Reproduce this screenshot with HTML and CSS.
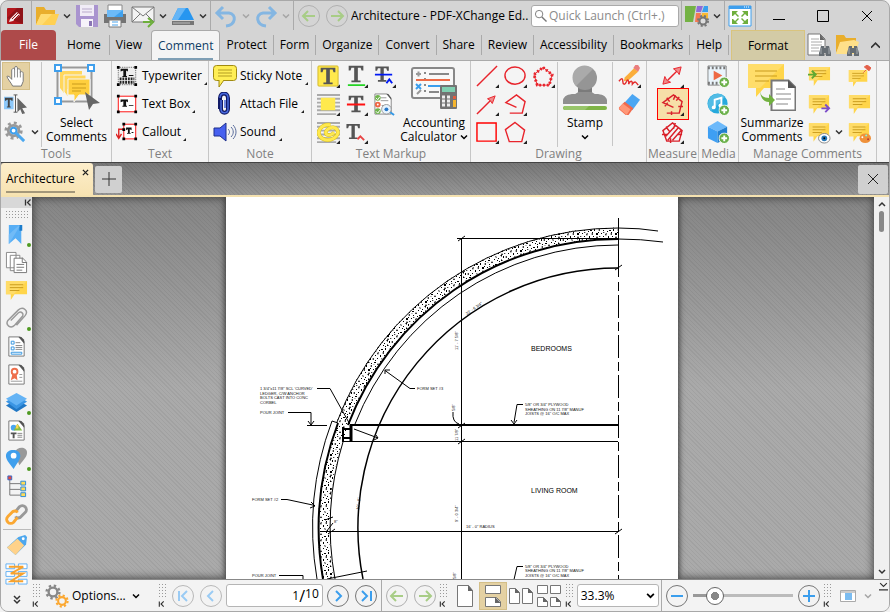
FILE: index.html
```
<!DOCTYPE html>
<html lang="en">
<head>
  <meta charset="UTF-8" />
  <meta name="viewport" content="width=device-width, initial-scale=1.0"/>
  <title>Architecture - PDF-XChange Editor</title>
  <link rel="stylesheet" href="styles.css">
</head>
<body>
  <!-- shared icons -->
  <svg class="sprite" aria-hidden="true">
    <defs>
      <pattern id="concrete" width="19" height="17" patternUnits="userSpaceOnUse">
        <rect width="19" height="17" fill="#fff"/>
        <path d="M1 1l2 1-1 1zM6 0h2v2zM11 2l2-1v2zM16 1h1v1h-1zM3 5h1v1H3zM7 4l2 2H7zM13 5h2v1h-2zM17 6l1 2h-2zM1 9h2v1H1zM5 8h1v2H5zM9 9l2-1v2zM14 9h1v1h-1zM2 13l2-1v2zM7 12h2v2H7zM12 12h1v1h-1zM16 13l2-1-1 3zM4 15h1v1H4zM10 15l2 1h-2zM14 15h1v1h-1zM10 6h1v1h-1zM0 4h1v1H0zM4 3h1v1H4zM14 3h1v1h-1zM5 6h1v1H5zM12 7l2 1h-1zM3 11h1v1H3zM9 11h1v1H9zM14 11l2 1h-2zM8 15l1 2H7zM18 10h1v1h-1zM0 15h1v2H0zM9 1h1v2H9z" fill="#000"/>
      </pattern>
      <symbol id="chev" viewBox="0 0 8 8"><path d="M1 2.500l3 3 3-3" fill="none" stroke="currentColor" stroke-width="1.500"/></symbol>
      <symbol id="collapse" viewBox="0 0 8 8"><path d="M1.500 1v6M6.500 1l-3 3 3 3" fill="none" stroke="#333" stroke-width="1.300"/></symbol>
      <symbol id="note" viewBox="0 0 24 24">
        <path d="M1 2h22v14H10l-4 6v-6H1z" fill="#ffd54a"/>
        <path d="M1 2h22L9 16H1z" fill="#ffdc68"/>
        <path d="M5 6h14M5 9h14M5 12h10" stroke="#c99b1c"/>
      </symbol>
      <symbol id="circ" viewBox="0 0 24 24"><circle cx="12" cy="12" r="10.500" fill="none" stroke="currentColor"/></symbol>
      <symbol id="back" viewBox="0 0 24 24"><circle cx="12" cy="12" r="10.500" fill="none" stroke="#b0b0b0"/><path d="M18 12H7M11 7l-5 5 5 5" fill="none" stroke="#a8cd86" stroke-width="2"/></symbol>
      <symbol id="fwd" viewBox="0 0 24 24"><circle cx="12" cy="12" r="10.500" fill="none" stroke="#b0b0b0"/><path d="M6 12h11M13 7l5 5-5 5" fill="none" stroke="#a8cd86" stroke-width="2"/></symbol>
      <symbol id="undo" viewBox="0 0 24 24"><path d="M9 3L3 9l6 6M3 9h12c8 1 7 12-3 13" fill="none" stroke="#84b6e2" stroke-width="3"/></symbol>
      <symbol id="binoc" viewBox="0 0 12 12"><path d="M2 1h3v2h2V1h3l2 7v3H7V8H5v3H0V8z" fill="#666d73"/><path d="M2 3v6M10 3v6" stroke="#a5abb0"/></symbol>
      <symbol id="plus" viewBox="0 0 12 12"><circle cx="6" cy="6" r="5.500" fill="#6ab04a" stroke="#fff"/><path d="M6 3v6M3 6h6" stroke="#fff" stroke-width="2"/></symbol>
      <symbol id="sheet" viewBox="0 0 24 24"><path d="M4 2h12l4 5v15H4z" fill="#fff" stroke="#777"/><path d="M14 2l6 7V5l-3-3z" fill="#555"/></symbol>
      <symbol id="gear" viewBox="0 0 20 20"><circle cx="10" cy="10" r="5.500" fill="none" stroke="currentColor" stroke-width="3"/><circle cx="10" cy="10" r="8" fill="none" stroke="currentColor" stroke-width="3" stroke-dasharray="3 3.280"/></symbol>
      <symbol id="corner" viewBox="0 0 4 4"><path d="M4 0v4H0z" fill="#222"/></symbol>
      <symbol id="bigT" viewBox="0 0 24 24"><path d="M4 3h16v5h-2l-1-3h-3v14h3v2H7v-2h3V5H7L6 8H4z" fill="#555"/></symbol>
    </defs>
  </svg>

  <div class="window">
    <header class="titlebar">
      <svg class="logo" viewBox="0 0 16 16"><rect width="16" height="16" rx="1" fill="#b3171d"/><path d="M0 10L10 0h6v16z" fill="#8f1218"/><path d="M3 11l7-7 3 3-7 6-4 1z" fill="#f4e8e8"/><path d="M5 11l6-6M7 12l5-5" stroke="#9c171c"/></svg>
      <span class="sep"></span>
      <button class="tool" aria-label="Open"><svg viewBox="0 0 24 24"><path d="M1 3h8l2 3h9v5H6L1 21z" fill="#e9ae2c"/><path d="M6 10h18l-4 11H1z" fill="#ffd052"/><path d="M6 10h11L7 21H1z" fill="#ffdc72"/></svg></button>
      <button class="drop" aria-label="Open options"><svg><use href="#chev"/></svg></button>
      <button class="tool" aria-label="Save"><svg viewBox="0 0 24 24"><path d="M1 1h22v22H4l-3-3z" fill="#a994cf"/><path d="M5 1h14v11H5z" fill="#f0ecf6"/><path d="M7 5h10M7 8h10" stroke="#b9aacc"/><path d="M6 15h12v8H6z" fill="#f6f3fa"/><path d="M14 17h3v5h-3z" fill="#8a75b3"/></svg></button>
      <button class="tool" aria-label="Print"><svg viewBox="0 0 24 24"><path d="M5 1h14v6H5z" fill="#fff" stroke="#888"/><path d="M1 10h22v9H1z" fill="#747474"/><path d="M4 6h16v7H4z" fill="#3fa1ee"/><path d="M4 6h16l-9 7H4z" fill="#6cbaf7"/><path d="M6 16h12v7H6z" fill="#fff" stroke="#777"/><path d="M9 18h6M9 21h6" stroke="#4aa4ec"/></svg></button>
      <button class="tool" aria-label="Send by email"><svg viewBox="0 0 24 24"><path d="M1 3h22v15H1z" fill="#f3f3f3" stroke="#777"/><path d="M1 3l11 9 11-9M1 18l8-8M23 18l-8-8" fill="none" stroke="#777"/><path d="M12 18h8M17 14l5 4-5 5" fill="none" stroke="#6daf3b" stroke-width="2"/></svg></button>
      <button class="drop" aria-label="Email options"><svg><use href="#chev"/></svg></button>
      <button class="tool" aria-label="Scan"><svg viewBox="0 0 24 24"><path d="M7 4h10l6 12H1z" fill="#2796f0"/><path d="M7 4h8L7 16H1z" fill="#65b5f6"/><path d="M1 17h22v4H1z" fill="#767676"/><path d="M2 19h17" stroke="#bbb"/></svg></button>
      <button class="drop" aria-label="Scan options"><svg><use href="#chev"/></svg></button>
      <span class="sep"></span>
      <button class="tool" aria-label="Undo"><svg><use href="#undo"/></svg></button>
      <button class="drop dim" aria-label="Undo list"><svg><use href="#chev"/></svg></button>
      <button class="tool flip" aria-label="Redo"><svg><use href="#undo"/></svg></button>
      <button class="drop dim" aria-label="Redo list"><svg><use href="#chev"/></svg></button>
      <span class="sep"></span>
      <button class="tool" aria-label="Previous view"><svg><use href="#back"/></svg></button>
      <button class="tool" aria-label="Next view"><svg><use href="#fwd"/></svg></button>
      <h1 class="title">Architecture - PDF-XChange Ed..</h1>
      <label class="search">
        <svg viewBox="0 0 14 14"><circle cx="5.500" cy="5.500" r="4" fill="none" stroke="#777"/><path d="M8.500 8.500l5 5" stroke="#777" stroke-width="1.500"/></svg>
        <input type="text" placeholder="Quick Launch (Ctrl+.)" aria-label="Quick Launch">
      </label>
      <span class="sep"></span>
      <button class="tool" aria-label="UI options"><svg viewBox="0 0 24 24"><path d="M0 2h11L8 18H0z" fill="#74b244"/><path d="M12 2h6l-2 6h-5z" fill="#8f6bd8"/><path d="M19 2h4v6h-6z" fill="#38a0ee"/><path d="M11 9h5l-2 9h-4z" fill="#f47952"/><path d="M17 9h6v6h-7z" fill="#f9b932"/><circle cx="18" cy="17" r="3.500" fill="#ddd" stroke="#777" stroke-width="2"/><circle cx="18" cy="17" r="5" fill="none" stroke="#777" stroke-width="2" stroke-dasharray="2 2"/></svg></button>
      <button class="drop" aria-label="UI options list"><svg><use href="#chev"/></svg></button>
      <span class="sep"></span>
      <button class="tool" aria-label="Full screen"><svg viewBox="0 0 24 24"><path d="M1 2h22v20H1z" fill="#fff" stroke="#3f9fed"/><path d="M1 2h22v3H1z" fill="#3f9fed"/><path d="M16 3h1M18 3h1M20 3h1" stroke="#fff"/><path d="M4 7h6L8 9l3 3-1 1-3-3-2 2H4zM20 7h-6l2 2-3 3 1 1 3-3 2 2h1zM4 20h6l-2-2 3-3-1-1-3 3-2-2H4zM20 20h-6l2-2-3-3 1-1 3 3 2-2h1z" fill="#6fae3c"/></svg></button>
      <span class="sep"></span>
      <button class="winbtn" aria-label="Minimize"><svg viewBox="0 0 14 14"><path d="M1 10.500h12" stroke="#000"/></svg></button>
      <button class="winbtn" aria-label="Maximize"><svg viewBox="0 0 14 14"><path d="M1.500 1.500h11v11h-11z" fill="none" stroke="#000"/></svg></button>
      <button class="winbtn" aria-label="Close"><svg viewBox="0 0 14 14"><path d="M2 2l10 10M12 2L2 12" stroke="#000"/></svg></button>
    </header>

    <nav class="tabs">
      <button class="tab file">File</button>
      <button class="tab">Home</button>
      <button class="tab last">View</button>
      <button class="tab active"><span>Comment</span></button>
      <button class="tab">Protect</button>
      <button class="tab">Form</button>
      <button class="tab">Organize</button>
      <button class="tab">Convert</button>
      <button class="tab">Share</button>
      <button class="tab">Review</button>
      <button class="tab">Accessibility</button>
      <button class="tab">Bookmarks</button>
      <button class="tab">Help</button>
      <button class="tab format">Format</button>
      <span class="grow"></span>
      <button class="tool" aria-label="Find"><svg viewBox="0 0 24 24"><path d="M1 1h12l5 5v16H1z" fill="#fff" stroke="#777"/><path d="M13 1v6h5" fill="#666"/><path d="M4 6h8M4 9h11M4 12h11M4 15h8M4 18h8" stroke="#aaa"/><use href="#binoc" x="12" y="12" width="12" height="12"/></svg></button>
      <button class="tool" aria-label="Search"><svg viewBox="0 0 24 24"><path d="M1 2h8l2 3h10v6H5L1 20z" fill="#e9ae2c"/><path d="M5 9l14-2 5 2-4 12H1z" fill="#ffe08a"/><use href="#binoc" x="12" y="12" width="12" height="12"/></svg></button>
      <button class="tool min" aria-label="Collapse ribbon"><svg viewBox="0 0 8 8"><path d="M0 6l4-4 4 4" fill="none" stroke="#333" stroke-width="1.500"/></svg></button>
    </nav>

    <section class="ribbon">
      <div class="group g-tools">
        <div class="body">
          <div class="stack line">
            <button class="ico on" aria-label="Hand"><svg viewBox="0 0 24 24"><path d="M8 22c-2-4-5-7-6-10 1-1 3 0 5 3V5c1-2 3-2 3 0V3c0-2 3-2 3 0v2c1-2 3-1 3 1v2c1-2 3-1 3 1v8l-2 5z" fill="#fff" stroke="#777"/><path d="M10 5v8M13 4v9M16 7v6" stroke="#888"/></svg></button>
            <button class="ico" aria-label="Select text"><svg viewBox="0 0 24 24"><path d="M0 4h10v13H0z" fill="#8cc8fa"/><path d="M1 5h8v3H8L7 7H6v7h1v1H3v-1h1V7H3L2 8H1z" fill="#444"/><path d="M12 2v18M10 2h4M10 20h4" stroke="#555"/><path d="M14 5l10 10-5 1 3 5-3 1-2-5-3 3z" fill="#666"/></svg></button>
            <div class="pair">
              <button class="ico" aria-label="Tool settings"><svg viewBox="0 0 24 24"><g color="#999"><use href="#gear" x="0" y="0" width="20" height="20"/></g><circle cx="10" cy="10" r="3" fill="#fff" stroke="#3b9eed" stroke-width="2"/><path d="M12 12l9 9" stroke="#4ba8ef" stroke-width="3"/></svg></button>
              <button class="drop" aria-label="Tool settings list"><svg><use href="#chev"/></svg></button>
            </div>
          </div>
          <button class="big">
            <svg viewBox="0 0 48 48"><path d="M4.500 4.500h34v34h-34z" fill="none" stroke="#999" stroke-width="2"/><path d="M7 8h22v14H11v8l-4-5z" fill="#ffd75d"/><path d="M11 12h22v14H15v8l-4-5z" fill="#ffd75d" stroke="#f4f4f4"/><path d="M15 16h22v16H26l-5 7v-7h-6z" fill="#ffcf3e" stroke="#f4f4f4"/><path d="M19 21h14M19 25h14M19 28h9" stroke="#c99b1c"/><g fill="#fff" stroke="#3f9fed" stroke-width="2"><path d="M2 2h6v6H2zM35 2h6v6h-6zM2 35h6v6H2z"/></g><path d="M32 29l15 11-7 1-4 6z" fill="#666"/></svg>
            <span>Select<br>Comments</span>
          </button>
        </div>
        <h2>Tools</h2>
      </div>

      <div class="group g-text">
        <div class="body stack">
          <button class="row"><svg viewBox="0 0 24 24"><path d="M2.500 2.500h19v19h-19z" fill="#eee" stroke="#555" stroke-dasharray="1 1"/><path d="M5 4h8v3l-2-1v6h1v1H7v-1h1V6L5 7zM14 11h5v1h-5z" fill="#111"/><path d="M4 15h16M4 19h16" stroke="#222" stroke-width="3" stroke-dasharray="2 1"/><path d="M1 1h3v3H1zM20 1h3v3h-3zM1 20h3v3H1zM20 20h3v3h-3z"/></svg>Typewriter<svg class="tick"><use href="#corner"/></svg></button>
          <button class="row"><svg viewBox="0 0 24 24"><path d="M2.500 3.500h19v17h-19z" fill="#fff" stroke="#f00"/><path d="M5 7h8v3l-2-1v5h1v1H7v-1h1V9l-3 1zM14 13h5v1h-5z" fill="#111"/><path d="M1 2h3v3H1zM20 2h3v3h-3zM1 19h3v3H1zM20 19h3v3h-3z"/></svg>Text Box<svg class="tick"><use href="#corner"/></svg></button>
          <button class="row"><svg viewBox="0 0 24 24"><path d="M8.500 3.500h13v16h-13z" fill="#fff" stroke="#f00"/><path d="M8 9H3v9M0 14l3 5 3-5" fill="none" stroke="#d22" stroke-width="1.500"/><path d="M11 7h6v3l-2-1v4h1v1h-4v-1h1V9l-2 1zM17 12h2v1h-2z" fill="#111"/><path d="M7 2h3v3H7zM20 2h3v3h-3zM7 18h3v3H7zM20 18h3v3h-3zM7 8h3v3H7z"/></svg>Callout<svg class="tick"><use href="#corner"/></svg></button>
        </div>
        <h2>Text</h2>
      </div>

      <div class="group g-note">
        <div class="body stack">
          <button class="row"><svg viewBox="0 0 24 24"><rect x="0.500" y="1.500" width="23" height="15" rx="3" fill="#ffee55" stroke="#a08a10"/><path d="M6 16v7l5-7" fill="#ffee55" stroke="#a08a10"/><path d="M5 6h14M5 9h14M5 12h14" stroke="#b39d22"/></svg>Sticky Note<svg class="tick"><use href="#corner"/></svg></button>
          <button class="row"><svg viewBox="0 0 24 24"><path d="M8 8v9c0 5 7 5 7 0V6c0-6-8-6-8 0v11" fill="none" stroke="#111a66" stroke-width="4"/><path d="M12 8v8M8 8v9c0 5 7 5 7 0V6c0-6-8-6-8 0" fill="none" stroke="#4668dd" stroke-width="1.500"/></svg>Attach File<svg class="tick"><use href="#corner"/></svg></button>
          <button class="row"><svg viewBox="0 0 24 24"><path d="M1 8h6l6-5v18l-6-5H1z" fill="#4660f0" stroke="#1c2e8c"/><path d="M15 9c2 2 2 4 0 6M18 7c3 3 3 7 0 10M20 5c4 4 4 10 0 14" fill="none" stroke="#5b6d9c"/></svg>Sound<svg class="tick"><use href="#corner"/></svg></button>
        </div>
        <h2>Note</h2>
      </div>

      <div class="group g-markup">
        <div class="body">
          <div class="grid3">
            <button class="ico" aria-label="Highlight"><svg viewBox="0 0 24 24"><rect x="1" y="1" width="21" height="21" rx="1" fill="#ffe94d" stroke="#d3b92a"/><use href="#bigT" width="23" height="23"/><use href="#corner" x="20" y="20" width="4" height="4"/></svg></button>
            <button class="ico" aria-label="Underline"><svg viewBox="0 0 24 24"><use href="#bigT" y="-2" width="23" height="23"/><path d="M3 21h18" stroke="#25d425" stroke-width="2"/><use href="#corner" x="20" y="20" width="4" height="4"/></svg></button>
            <button class="ico" aria-label="Replace text"><svg viewBox="0 0 24 24"><use href="#bigT" y="-2" x="-1" width="21" height="23"/><path d="M2 10h18" stroke="#0019f5" stroke-width="2"/><path d="M14 19l3-4 3 4" fill="none" stroke="#0019f5" stroke-width="2"/><use href="#corner" x="20" y="20" width="4" height="4"/></svg></button>
            <button class="ico" aria-label="Highlight area"><svg viewBox="0 0 24 24"><path d="M0 2h24M0 6h24M0 10h24M0 14h24M0 18h24M0 22h20" stroke="#aaa" stroke-width="2"/><path d="M4 5h15v13H4z" fill="#ffe94d"/><use href="#corner" x="20" y="20" width="4" height="4"/></svg></button>
            <button class="ico" aria-label="Strikeout"><svg viewBox="0 0 24 24"><use href="#bigT" width="23" height="23"/><path d="M2 12h19" stroke="#f11" stroke-width="2"/><use href="#corner" x="20" y="20" width="4" height="4"/></svg></button>
            <button class="ico" aria-label="Review list"><svg viewBox="0 0 24 24"><path d="M2 1h13l4 5v16H2z" fill="#fff" stroke="#888"/><path d="M14 1l5 6V5l-3-4z" fill="#555"/><path d="M8 5h6M8 8h8M9 13h4" stroke="#999"/><circle cx="5" cy="5" r="3" fill="#70b34d"/><circle cx="5" cy="12" r="2" fill="#fff" stroke="#e64" stroke-width="2"/><circle cx="5" cy="19" r="3" fill="#70b34d"/><path d="M3 5l2 2 2-3M3 19l2 2 2-3" fill="none" stroke="#fff"/><circle cx="14" cy="17" r="5" fill="#e7f3fd" stroke="#999"/><circle cx="14" cy="17" r="2" fill="#2878c8"/><path d="M18 20l4 3" stroke="#3598e4" stroke-width="2"/></svg></button>
            <button class="ico" aria-label="Marker"><svg viewBox="0 0 24 24"><path d="M0 2h24M0 6h24M0 10h24M0 14h24M0 18h24M0 22h20" stroke="#aaa" stroke-width="2"/><path d="M14 4C4 3-2 12 5 18c8 5 20-2 16-9C17 3 6 10 10 14c3 2 7-1 8-2" fill="none" stroke="#d5bd26" stroke-width="4"/><path d="M14 4C4 3-2 12 5 18c8 5 20-2 16-9C17 3 6 10 10 14c3 2 7-1 8-2" fill="none" stroke="#ffe94d" stroke-width="3"/><use href="#corner" x="20" y="20" width="4" height="4"/></svg></button>
            <button class="ico" aria-label="Squiggly"><svg viewBox="0 0 24 24"><use href="#bigT" y="0" x="-2" width="21" height="22"/><path d="M13 19l3-3 4 4" fill="none" stroke="#e84444" stroke-width="2"/><use href="#corner" x="20" y="20" width="4" height="4"/></svg></button>
          </div>
          <button class="big">
            <svg viewBox="0 0 48 48"><rect x="2" y="5" width="42" height="30" rx="2" fill="#f8f8f8" stroke="#888" stroke-width="2"/><path d="M14 10h2M14 16h2M14 22h2M14 28h2" stroke="#888" stroke-width="2"/><path d="M19 11h20M19 23h12M19 29h10" stroke="#888" stroke-width="2"/><path d="M6 17h34" stroke="#ee6b47" stroke-width="2"/><path d="M18 23h15" stroke="#3b9eed" stroke-width="2"/><path d="M6 11h5M8.500 8.500v5M11 27l-4 4" stroke="#999" stroke-width="2"/><path d="M6 21l5 5M11 21l-5 5" stroke="#3b9eed" stroke-width="2"/><rect x="30" y="22" width="17" height="24" rx="1" fill="#737373"/><path d="M32 24h13v5H32z" fill="#7fd0b1"/><g stroke="#eee" stroke-width="3" stroke-dasharray="3 2"><path d="M32 34h10M32 38h10M32 42h10"/></g><path d="M43 33h3v3h-3z" fill="#e35d40"/><path d="M43 37h3v7h-3z" fill="#f6b52d"/></svg>
            <span>Accounting<br>Calculator <svg class="inl"><use href="#chev"/></svg></span>
          </button>
        </div>
        <h2>Text Markup</h2>
      </div>

      <div class="group g-draw">
        <div class="body">
          <div class="grid3 line">
            <button class="ico" aria-label="Line"><svg viewBox="0 0 24 24"><path d="M1 22L22 1" stroke="#e8242c" stroke-width="1.500"/><use href="#corner" x="20" y="20" width="4" height="4"/></svg></button>
            <button class="ico" aria-label="Oval"><svg viewBox="0 0 24 24"><ellipse cx="11.500" cy="11" rx="10.500" ry="9" fill="none" stroke="#e8242c" stroke-width="1.500"/><use href="#corner" x="20" y="20" width="4" height="4"/></svg></button>
            <button class="ico" aria-label="Cloud"><svg viewBox="0 0 24 24"><path d="M11.500 2.500l9.500 7.500-3 11H5.500L2 10z" fill="none" stroke="#e8242c"/><path d="M11.500 2.500l9.500 7.500-3 11H5.500L2 10z" fill="none" stroke="#e8242c" stroke-width="3" stroke-dasharray="2 2"/><use href="#corner" x="20" y="20" width="4" height="4"/></svg></button>
            <button class="ico" aria-label="Arrow"><svg viewBox="0 0 24 24"><path d="M1 22L17 6" stroke="#e8242c" stroke-width="1.500"/><path d="M12 6l8-3-3 8-2-3z" fill="#f08a8a" stroke="#e8242c"/><use href="#corner" x="20" y="20" width="4" height="4"/></svg></button>
            <button class="ico" aria-label="Polyline"><svg viewBox="0 0 24 24"><path d="M13 15L2 10l11-8 9 7-3 12H6" fill="none" stroke="#e8242c" stroke-width="1.500"/><use href="#corner" x="20" y="20" width="4" height="4"/></svg></button>
            <span></span>
            <button class="ico" aria-label="Rectangle"><svg viewBox="0 0 24 24"><path d="M1 2h20v19H1z" fill="none" stroke="#f00" stroke-width="1.500"/><use href="#corner" x="20" y="20" width="4" height="4"/></svg></button>
            <button class="ico" aria-label="Polygon"><svg viewBox="0 0 24 24"><path d="M11.500 1.500l10 8-3 12h-13L1.500 9z" fill="none" stroke="#e8242c" stroke-width="1.500"/><use href="#corner" x="20" y="20" width="4" height="4"/></svg></button>
          </div>
          <button class="big stamp line">
            <svg viewBox="0 0 48 48"><path d="M17 20h14v14H17z" fill="#7b7b7b"/><circle cx="24" cy="15" r="12" fill="#959595"/><path d="M15 23a12 12 0 0117-17z" fill="#aaa"/><path d="M2 41v-4c1-4 5-6 11-6 3 0 3-2 5-2h12c2 0 2 2 5 2 6 0 10 2 11 6v4z" fill="#8f8f8f"/><rect x="2" y="43" width="44" height="4" rx="2" fill="#7fb447"/><path d="M4 43h24l-4 4H4c-2 0-2-4 0-4z" fill="#98c56a"/></svg>
            <span>Stamp</span>
            <svg class="inl"><use href="#chev"/></svg>
          </button>
          <div class="stack side">
            <button class="ico" aria-label="Pencil"><svg viewBox="0 0 24 24"><path d="M7 13L17 3l4 4-10 9-5 1z" fill="#fbae3b"/><path d="M16 3l2-3h3l2 3-2 4z" fill="#ea7d7d"/><path d="M1 17c3-4 4-3 4 0s2 5 4 0c1-3 3 0 2 3 2-4 4-4 4 0 3-4 4-2 6 1" fill="none" stroke="#e32c2c" stroke-width="1.500"/><use href="#corner" x="20" y="20" width="4" height="4"/></svg></button>
            <button class="ico" aria-label="Eraser"><svg viewBox="0 0 24 24"><path d="M15 1l8 6-8 11-9-7z" fill="#4ba6f3"/><path d="M7 9l9 7-5 7H8l-7-6v-2z" fill="#f2694b"/><path d="M5 11l8 6-4 6-8-7z" fill="#ff9777"/></svg></button>
          </div>
        </div>
        <h2>Drawing</h2>
      </div>

      <div class="group g-measure">
        <div class="body stack">
          <button class="ico" aria-label="Distance"><svg viewBox="0 0 24 24"><path d="M7 16L18 5" stroke="#e8242c" stroke-width="1.500"/><path d="M13 4l8-2-2 8-2-3zM4 12l-2 8 8-2-4-2z" fill="#f08a8a" stroke="#e8242c"/><use href="#corner" x="20" y="20" width="4" height="4"/></svg></button>
          <button class="ico picked" aria-label="Perimeter"><svg viewBox="0 0 24 24"><path d="M13 15L2 10l11-8 9 7-3 12H6M6 5l3 4M15 2l-2 5M19 4l-3 4M18 14h5M11 19v4M7 10l-3 4" fill="none" stroke="#d9202a" stroke-width="1.500"/><use href="#corner" x="20" y="20" width="4" height="4"/></svg></button>
          <button class="ico" aria-label="Area"><svg viewBox="0 0 24 24"><path d="M12 2l10 8-3 11H6L2 10zM5 16L15 5M7 20L18 7M12 20l9-10M5 6l4 5M15 2l-2 6M1 14h6M10 18v5M17 14h5" fill="none" stroke="#d9202a" stroke-width="1.500"/><use href="#corner" x="20" y="20" width="4" height="4"/></svg></button>
        </div>
        <h2>Measure</h2>
      </div>

      <div class="group g-media">
        <div class="body stack">
          <button class="ico" aria-label="Add video"><svg viewBox="0 0 24 24"><path d="M1 1h19v20H1z" fill="#eaf4fb" stroke="#888"/><path d="M1 3h19M1 19h19" stroke="#777" stroke-width="3" stroke-dasharray="2 2"/><path d="M7 6l9 5-9 5z" fill="#ed6a47"/><use href="#plus" x="12" y="12" width="12" height="12"/></svg></button>
          <button class="ico" aria-label="Add audio"><svg viewBox="0 0 24 24"><circle cx="11" cy="11" r="10.500" fill="#26a9dc"/><path d="M4 19L19 4A10.500 10.500 0 004 19z" fill="#52bce5"/><path d="M8 15V7l7-2v8" fill="none" stroke="#fff" stroke-width="2"/><circle cx="7" cy="15" r="2" fill="#fff"/><circle cx="14" cy="13" r="2" fill="#fff"/><use href="#plus" x="12" y="12" width="12" height="12"/></svg></button>
          <button class="ico" aria-label="Add 3D"><svg viewBox="0 0 24 24"><path d="M11 0l10 6-10 5L1 6z" fill="#6cb9fa"/><path d="M1 6l10 5v12L1 18z" fill="#3e9ff3"/><path d="M21 6l-10 5v12l10-5z" fill="#217fd0"/><use href="#plus" x="12" y="12" width="12" height="12"/></svg></button>
        </div>
        <h2>Media</h2>
      </div>

      <div class="group g-manage">
        <div class="body">
          <button class="big">
            <svg viewBox="0 0 48 48"><path d="M0 1h36v24H16l-8 9v-9H0z" fill="#ffd54a"/><path d="M0 1h36L12 25H0z" fill="#ffdd6a"/><path d="M7 8h22M7 13h22M7 18h14" stroke="#c99b1c"/><path d="M23.500 17.500h17l7 7v23h-24z" fill="#fff" stroke="#777" stroke-width="2"/><path d="M40 17v8h8z" fill="#555"/><path d="M28 26h9M28 31h15M28 36h15M28 41h12" stroke="#888"/><path d="M12 26c0 8 5 9 9 9v-4l6 6-6 6v-4c-6 0-9-5-9-13z" fill="#72b13f"/></svg>
            <span>Summarize<br>Comments</span>
          </button>
          <div class="grid2">
            <button class="ico" aria-label="Import"><svg viewBox="0 0 24 24"><use href="#note" width="24" height="24"/><path d="M0 10h8M4 6l4 4-4 4" fill="none" stroke="#5fa932" stroke-width="2"/></svg></button>
            <button class="ico" aria-label="Pin comments"><svg viewBox="0 0 24 24"><use href="#note" y="3" width="21" height="22"/><path d="M16 8l3-3M17 2l5 4 2-3-4-3z" stroke="#e4604a" fill="#e4604a"/></svg></button>
            <button class="ico" aria-label="Export"><svg viewBox="0 0 24 24"><use href="#note" width="23" height="24"/><path d="M14 16h8M18 12l4 4-4 4" fill="none" stroke="#7c4ec9" stroke-width="2"/></svg></button>
            <button class="ico" aria-label="Comment list"><svg><use href="#note"/></svg></button>
            <div class="pair">
              <button class="ico" aria-label="Show comments"><svg viewBox="0 0 24 24"><use href="#note" width="23" height="24"/><ellipse cx="17" cy="18" rx="6" ry="5" fill="#fff" stroke="#888"/><circle cx="17" cy="18" r="3" fill="#2476b6"/><circle cx="17" cy="18" r="1"/></svg></button>
              <button class="drop" aria-label="Show options"><svg><use href="#chev"/></svg></button>
            </div>
            <button class="ico" aria-label="Comment styles"><svg viewBox="0 0 24 24"><use href="#note" width="23" height="24"/><ellipse cx="18" cy="18" rx="6" ry="5" fill="#ef913a"/><circle cx="15" cy="17" r="1" fill="#fff"/><circle cx="19" cy="15" r="1" fill="#7fd"/><circle cx="21" cy="19" r="1" fill="#b33"/></svg></button>
          </div>
        </div>
        <h2>Manage Comments</h2>
      </div>
    </section>

    <div class="doctabs">
      <button class="doctab"><span>Architecture</span><svg viewBox="0 0 8 8"><path d="M1 1l6 6M7 1L1 7" stroke="#222" stroke-width="1.500"/></svg></button>
      <button class="sq" aria-label="New tab"><svg viewBox="0 0 16 16"><path d="M8 1v14M1 8h14" stroke="#333"/></svg></button>
      <span class="grow"></span>
      <button class="sq wide" aria-label="Close document"><svg viewBox="0 0 16 16"><path d="M3 3l10 10M13 3L3 13" stroke="#222"/></svg></button>
    </div>

    <main class="main">
      <aside class="sidebar">
        <div class="sidehead"><svg><use href="#collapse"/></svg></div>
        <div class="grip wideg"></div>
        <button class="pane dot" aria-label="Bookmarks"><svg viewBox="0 0 24 24"><path d="M4 2h13v20l-6-6-7 6z" fill="#57aef5"/><path d="M15 2h3v6h-3z" fill="#1c7dcc"/><path d="M4 22V12L15 2v2z" fill="#71bbf7"/></svg></button>
        <button class="pane" aria-label="Thumbnails"><svg viewBox="0 0 24 24"><path d="M1.500 1.500h10v16h-10zM5.500 4.500h10v16h-10z" fill="#fff" stroke="#888"/><path d="M9.500 7.500h9l4 4v11h-13z" fill="#fff" stroke="#777"/><path d="M18 7v5h5M12 14h8M12 17h8M12 20h6" fill="none" stroke="#777"/></svg></button>
        <button class="pane" aria-label="Comments"><svg><use href="#note"/></svg></button>
        <button class="pane dot" aria-label="Attachments"><svg viewBox="0 0 24 24"><path d="M6 14l8-8c3-2 6 1 4 4l-8 9c-4 4-10 0-7-5L14 3c5-4 11 1 7 6l-9 10" fill="none" stroke="#999" stroke-width="1.500"/></svg></button>
        <button class="pane" aria-label="Fields"><svg viewBox="0 0 24 24"><use href="#sheet" width="24" height="24"/><path d="M6.500 6.500h3v3h-3zM6.500 12.500h3v3h-3zM6.500 18h11v2h-11z" fill="#fff" stroke="#3595e0"/><path d="M11 8h5M11 11h7M11 13h7M11 15h7" stroke="#888"/></svg></button>
        <button class="pane" aria-label="Signatures"><svg viewBox="0 0 24 24"><use href="#sheet" width="24" height="24"/><path d="M8 11l-2 7 4-2 3 2-1-7z" fill="#ee6e4b"/><circle cx="10" cy="9" r="3" fill="#fff" stroke="#ee6e4b" stroke-width="2"/><path d="M15 12h3M15 15h3M6 19h12" stroke="#999"/></svg></button>
        <button class="pane dot" aria-label="Layers"><svg viewBox="0 0 24 24"><path d="M1 15l11-6 11 6-11 7z" fill="#2177c4"/><path d="M1 11l11-6 11 6-11 8z" fill="#3a95e4"/><path d="M1 8l11-6 11 6-11 7z" fill="#64b3f5"/></svg></button>
        <button class="pane" aria-label="Content"><svg viewBox="0 0 24 24"><use href="#sheet" width="24" height="24"/><circle cx="9" cy="9" r="3" fill="#4ba6ef"/><path d="M13 5l5 7H9z" fill="#83bd45"/><path d="M12 6h2v4h-3z" fill="#ffd34e"/><path d="M6 14h6v2h-2v4H8v-4H6z" fill="#555"/><path d="M13 15h5M13 17h5M13 19h5" stroke="#888"/></svg></button>
        <button class="pane dot" aria-label="Destinations"><svg viewBox="0 0 24 24"><path d="M15 19c6-7 8-10 8-13 0-7-11-7-13 0" fill="#999"/><path d="M9 23C4 16 1 13 1 9c0-8 15-8 15 0 0 4-3 7-7 14z" fill="#3f9fed"/><circle cx="9" cy="9" r="3" fill="#fff"/></svg></button>
        <button class="pane" aria-label="Tags"><svg viewBox="0 0 24 24"><path d="M5 4v17h11M5 9h11M5 15h11" fill="none" stroke="#777"/><path d="M3 1h4v4H3z" fill="#e84b3c" stroke="#36c"/><path d="M16.500 6.500h5v4h-5zM16.500 12.500h5v4h-5zM16.500 18.500h5v4h-5z" fill="#ffdc58" stroke="#2b8bdb"/></svg></button>
        <button class="pane" aria-label="Links"><svg viewBox="0 0 24 24"><path d="M11 9l4-5c4-4 10 2 6 6l-5 5c-2 1-4 1-5-1" fill="none" stroke="#999" stroke-width="3"/><path d="M13 15l-4 5c-4 4-10-2-6-6l5-5c2-1 4-1 5 1" fill="none" stroke="#fba832" stroke-width="3"/></svg></button>
        <hr>
        <button class="pane" aria-label="Named items"><svg viewBox="0 0 24 24"><path d="M14 3l7-2 2 2-1 8-11 11-9-8z" fill="#4da7ee"/><path d="M13 5l7 7-9 10-9-8z" fill="#ffd28a"/><circle cx="19" cy="5" r="1.500" fill="#fff"/></svg></button>
        <button class="pane" aria-label="Order"><svg viewBox="0 0 24 24"><path d="M1 2h9v5H1zM14 2h9v5h-9zM1 10h9v5H1zM14 10h9v5h-9zM1 18h9v5H1zM14 18h9v5h-9z" fill="#fff" stroke="#62b0f2"/><path d="M4 5h15L6 12h13L6 20h13" fill="none" stroke="#f8a22c" stroke-width="2"/></svg></button>
        <span class="grow"></span>
        <button class="more" aria-label="More panes"><svg viewBox="0 0 10 10"><path d="M2 1l3 3 3-3M2 5l3 3 3-3" fill="none" stroke="#333" stroke-width="1.500"/></svg></button>
      </aside>

      <div class="viewer">
        <div class="workrow">
          <div class="work">
            <svg class="page" viewBox="226 197 452 382" preserveAspectRatio="xMidYMin slice">
              <g fill="none" stroke="#000">
                <!-- concrete wall, all arcs share the centre 618,528 -->
                <path d="M342 423A295 295 0 01618 233" stroke="url(#concrete)" stroke-width="11"/>
                <path d="M343 424A294 294 0 00328 579" stroke="url(#concrete)" stroke-width="11"/>
                <path d="M337 422A300 300 0 01618 228Q640 228 658 231"/>
                <path d="M348 425A289 289 0 01618 239" stroke-width="2"/>
                <path d="M618 239Q641 239 663 242M355 424A283 283 0 01618 245"/>
                <path d="M363 579A260 260 0 01618 268" stroke-width="1.500"/>
                <path d="M317 579A305 305 0 01332 421l6 2"/>
                <path d="M323 579A299 299 0 01338 423" stroke-width="2"/>
                <path d="M335 579A288 288 0 01343 442"/>
                <!-- floors and dimension lines -->
                <path d="M350 425h268" stroke-width="2"/>
                <path d="M343 441.500h275M320 531.500h299M457 238.500h161M461.500 238v341M458 241l7-5M458 428l7-5M458 444l7-5M615 534l7-5M615 270l7-5M328 534l7-5"/>
                <path d="M618.500 218v59"/>
                <path d="M618.500 282v304" stroke-dasharray="9 4 23 4"/>
                <!-- ledger -->
                <path d="M351 425v17" stroke-width="3"/>
                <path d="M342 429h9M342 438h9M343 427v15" stroke-width="2"/>
                <path d="M354 429l24 9M374 440l4-2-2-3M327 579l40-8M333 523l-7 9M325 520l8-3"/>
                <!-- leaders -->
                <path d="M317 388.500h13l20 36M288 412.500h23V425M307 425.500h20M308 421l3 4 3-4M415 388.500h-5l-25-18M385 374v-4h5M281 499.500h6l28 6M311 502l4 4-5 2M523 404.500h-6l-3 18M511 420l3 4 3-4M523 566.500h-6l-3 13M453 412q-1 10 6 12M279 575.500h24v4"/>
              </g>
              <g class="rooms">
                <text x="531" y="351">BEDROOMS</text>
                <text x="531" y="493">LIVING ROOM</text>
              </g>
              <g class="notes">
                <text x="260" y="390">1 3/4"x11 7/8" SCL 'CURVED'</text>
                <text x="260" y="395">LEDGER, C/W ANCHOR</text>
                <text x="260" y="399">BOLTS CAST INTO CONC</text>
                <text x="260" y="404">CORBEL</text>
                <text x="260" y="414">POUR JOINT</text>
                <text x="417" y="390">FORM SET #3</text>
                <text x="252" y="501">FORM SET #2</text>
                <text x="252" y="577">POUR JOINT</text>
                <text x="525" y="406">5/8" OR 3/4" PLYWOOD</text>
                <text x="525" y="411">SHEATHING ON 11 7/8" MANUF</text>
                <text x="525" y="415">JOISTS @ 16" O/C MAX</text>
                <text x="525" y="568">5/8" OR 3/4" PLYWOOD</text>
                <text x="525" y="572">SHEATHING ON 11 7/8" MANUF</text>
                <text x="525" y="577">JOISTS @ 16" O/C MAX</text>
                <text x="466" y="528">16' - 0"  RADIUS</text>
                <text x="334" y="523">8"</text>
                <text transform="translate(458 350) rotate(-90)">11' - 7 5/8"</text>
                <text transform="translate(455 411) rotate(-90)">5/8"</text>
                <text transform="translate(458 441) rotate(-90)">11 7/8"</text>
                <text transform="translate(458 522) rotate(-90)">9' - 0 3/4"</text>
                <text transform="translate(456 579) rotate(-90)">5/8"</text>
                <text transform="translate(359 510) rotate(-83)">10' - 0"</text>
                <text transform="translate(467 315) rotate(-35)">22' - 6 3/4"</text>
              </g>
            </svg>
          </div>
          <div class="scroll">
            <svg viewBox="0 0 8 8"><path d="M1 6l3-3 3 3" fill="none" stroke="#333" stroke-width="1.500"/></svg>
            <span class="thumb"></span>
            <span class="grow"></span>
            <svg viewBox="0 0 8 8"><path d="M1 2l3 3 3-3" fill="none" stroke="#333" stroke-width="1.500"/></svg>
          </div>
        </div>

        <footer class="status">
          <div class="gripcol"><div class="grip"></div><svg><use href="#collapse"/></svg></div>
          <button class="options"><svg viewBox="0 0 24 24"><g color="#888"><use href="#gear" x="0" y="0" width="16" height="16"/></g><g color="#fba832"><use href="#gear" x="10" y="10" width="14" height="14"/></g></svg>Options...<svg class="inl"><use href="#chev"/></svg></button>
          <div class="gripcol"><div class="grip"></div><svg><use href="#collapse"/></svg></div>
          <button class="nav soft" aria-label="First page"><svg viewBox="0 0 24 24"><use href="#circ"/><path d="M8 7v10M16 7l-5 5 5 5" fill="none" stroke="#9acbf4" stroke-width="2"/></svg></button>
          <button class="nav soft" aria-label="Previous page"><svg viewBox="0 0 24 24"><use href="#circ"/><path d="M14 7l-5 5 5 5" fill="none" stroke="#9acbf4" stroke-width="2"/></svg></button>
          <div class="pagebox"><input type="text" value="1" aria-label="Page number"><span class="slash">/</span><span class="total">10</span></div>
          <button class="nav" aria-label="Next page"><svg viewBox="0 0 24 24"><use href="#circ"/><path d="M10 7l5 5-5 5" fill="none" stroke="#3b9eed" stroke-width="2"/></svg></button>
          <button class="nav" aria-label="Last page"><svg viewBox="0 0 24 24"><use href="#circ"/><path d="M8 7l5 5-5 5M17 7v10" fill="none" stroke="#3b9eed" stroke-width="2"/></svg></button>
          <span class="sep"></span>
          <button class="nav" aria-label="Previous view"><svg><use href="#back"/></svg></button>
          <button class="nav" aria-label="Next view"><svg><use href="#fwd"/></svg></button>
          <div class="gripcol"><div class="grip"></div><svg><use href="#collapse"/></svg></div>
          <div class="views">
            <button class="nav" aria-label="Single page"><svg viewBox="0 0 24 24"><path d="M4.500 1.500h11l4 5v16h-15z" fill="#fff" stroke="#777"/><path d="M15 1v6h5z" fill="#666"/></svg></button>
            <button class="nav sel" aria-label="Continuous"><svg viewBox="0 0 24 24"><path d="M4.500 1.500h15v8h-15zM4.500 13.500h11l4 4v5h-15z" fill="#fff" stroke="#777"/><path d="M14 13v6h6z" fill="#666"/></svg></button>
            <button class="nav" aria-label="Two pages"><svg viewBox="0 0 24 24"><path d="M0.500 4.500h6l4 4v11h-10zM13.500 4.500h6l4 4v11h-10z" fill="#fff" stroke="#777"/><path d="M6 4v5h5zM19 4v5h5z" fill="#666"/></svg></button>
            <button class="nav" aria-label="Two pages continuous"><svg viewBox="0 0 24 24"><path d="M0.500 1.500h10v8h-10zM13.500 1.500h10v8h-10zM0.500 13.500h6l4 4v5h-10zM13.500 13.500h6l4 4v5h-10z" fill="#fff" stroke="#777"/><path d="M6 13v5h5zM19 13v5h5z" fill="#666"/></svg></button>
          </div>
          <div class="gripcol"><div class="grip"></div><svg><use href="#collapse"/></svg></div>
          <div class="zoombox"><select aria-label="Zoom"><option>33.3%</option><option>100%</option></select><svg><use href="#chev"/></svg></div>
          <span class="sep"></span>
          <button class="nav" aria-label="Zoom out"><svg viewBox="0 0 24 24"><use href="#circ"/><path d="M6 12h12" stroke="#3b9eed" stroke-width="2"/></svg></button>
          <input class="slider" type="range" min="0" max="100" value="16" aria-label="Zoom level">
          <button class="nav" aria-label="Zoom in"><svg viewBox="0 0 24 24"><use href="#circ"/><path d="M6 12h12M12 6v12" stroke="#3b9eed" stroke-width="2"/></svg></button>
          <div class="gripcol"><div class="grip"></div><svg><use href="#collapse"/></svg></div>
          <button class="nav" aria-label="Pan and zoom"><svg viewBox="0 0 24 24"><path d="M4.500 6.500h15v11h-15z" fill="#fff" stroke="#aaa"/><path d="M5 7h14v2H5z" fill="#ccc"/><path d="M9 9h7v7H9z" fill="#7bbcf0"/></svg></button>
          <button class="drop dim" aria-label="More"><svg><use href="#chev"/></svg></button>
          <span class="grow"></span>
          <button class="end" aria-label="Last page"><svg viewBox="0 0 8 8"><path d="M1 1l3 3 3-3M0 7h8" fill="none" stroke="#333"/></svg></button>
        </footer>
      </div>
    </main>
  </div>
</body>
</html>
```
FILE: styles.css
```
* {
  box-sizing: border-box;
}

body {
  margin: 0;
  height: 100vh;
  background: #f3f3f3;
  font-family: "Open Sans", "Noto Sans", sans-serif;
  font-size: 12px;
  line-height: 14px;
  color: #000;
}

button {
  font: inherit;
  color: inherit;
  background: none;
  border: none;
  padding: 0;
  white-space: nowrap;
}

h1, h2 {
  margin: 0;
  font-size: 12px;
  font-weight: normal;
}

svg {
  display: block;
  flex: none;
}

.sprite {
  position: absolute;
  width: 0;
  height: 0;
}

.grow {
  flex: 1;
}

.window {
  height: 100%;
  display: flex;
  flex-direction: column;
  background: #d4d4d4;
  border: 1px solid #a8a8a8;
  border-radius: 8px;
  overflow: hidden;
}

/* title bar */
.titlebar {
  height: 29px;
  flex: none;
  display: flex;
  align-items: center;
}

.logo {
  width: 16px;
  height: 16px;
  margin: 0 7px 0 6px;
}

.sep {
  width: 1px;
  align-self: stretch;
  background: #aaa;
  margin: 0 1px;
  flex: none;
}

.tool {
  width: 28px;
  height: 28px;
  flex: none;
  display: flex;
  align-items: center;
  justify-content: center;
}

.tool svg {
  width: 24px;
  height: 24px;
}

.flip svg {
  transform: scaleX(-1);
}

.drop {
  width: 12px;
  flex: none;
  display: flex;
  align-items: center;
  justify-content: center;
  color: #333;
}

.drop svg,
.inl {
  width: 8px;
  height: 8px;
}

.dim {
  color: #a5a5a5;
}

.title {
  flex: 1;
  min-width: 0;
  overflow: hidden;
  white-space: nowrap;
}

.search {
  width: 148px;
  height: 22px;
  margin-right: 1px;
  display: flex;
  align-items: center;
  background: #fff;
  border: 1px solid #aaa;
  border-radius: 3px;
  padding-left: 2px;
}

.search svg {
  width: 13px;
  height: 13px;
}

.search input {
  flex: 1;
  min-width: 0;
  border: none;
  outline: none;
  background: none;
  font: inherit;
  padding: 0 0 0 2px;
}

.search input::placeholder {
  color: #8b8b8b;
}

.winbtn {
  width: 44px;
  height: 28px;
  display: flex;
  align-items: center;
  justify-content: center;
}

.winbtn svg {
  width: 14px;
  height: 14px;
}

/* ribbon tabs */
.tabs {
  height: 31px;
  flex: none;
  display: flex;
  align-items: center;
  border-bottom: 1px solid #aaa;
}

.tab {
  height: 20px;
  padding: 0 6px;
  border-right: 1px solid #aaa;
}

.tab.last {
  border-right: none;
  margin-right: 3px;
}

.tab.file {
  height: 30px;
  width: 55px;
  background: #ae4a4a;
  color: #fff;
  border: none;
  border-radius: 4px 4px 0 0;
  margin-right: 5px;
}

.tab.file + .tab {
  padding: 0 8px 0 6px;
}

.tab.active {
  height: 30px;
  padding: 2px 6px 0;
  background: #f4f4f4;
  color: #0f3d66;
  border: 1px solid #aaa;
  border-bottom: none;
  border-radius: 4px 4px 0 0;
}

.tab.active span {
  display: block;
  height: 26px;
  line-height: 24px;
  border-bottom: 2px solid #7f9fb5;
}

.tab.format {
  height: 30px;
  width: 74px;
  margin-left: 2px;
  background: #d3cba6;
  border: 1px solid #d9c47e;
  border-bottom: none;
}

.tool.min svg {
  width: 9px;
  height: 9px;
}

/* ribbon */
.ribbon {
  height: 102px;
  flex: none;
  display: flex;
  background: #f4f4f4;
  border-bottom: 1px solid #444;
}

.group {
  flex: none;
  display: flex;
  flex-direction: column;
  border-right: 1px solid #c6c6c6;
}

.body {
  height: 86px;
  display: flex;
  padding-top: 1px;
}

.group h2 {
  text-align: center;
  color: #808080;
}

.g-tools { width: 111px; }
.g-text { width: 97px; }
.g-note { width: 103px; }
.g-markup { width: 159px; }
.g-draw { width: 176px; }
.g-measure { width: 52px; }
.g-media { width: 40px; }
.g-manage { width: 138px; }

.stack {
  display: flex;
  flex-direction: column;
}

.body.stack {
  padding-left: 4px;
}

.g-measure .stack,
.g-media .stack {
  align-items: center;
  padding-left: 0;
}

.line {
  border-right: 1px solid #c6c6c6;
}

.pair {
  display: flex;
  align-items: center;
}

.ico {
  width: 28px;
  height: 28px;
  flex: none;
  display: flex;
  align-items: center;
  justify-content: center;
}

.ico svg {
  width: 23px;
  height: 23px;
}

.ico.on {
  margin-left: 1px;
  background: #e4d1a3;
  border: 1px solid #d4bf88;
}

.ico.picked {
  width: 32px;
  height: 32px;
  margin: -2px 0;
  background: #f6dfa8;
  border: 1px solid #f00;
}

.row {
  height: 28px;
  display: flex;
  align-items: center;
  gap: 3px;
}

.row svg {
  width: 24px;
  height: 24px;
}

.g-text .row {
  gap: 4px;
}

.g-text .row svg {
  width: 22px;
  height: 22px;
}

.row .tick,
.g-text .row .tick {
  width: 3px;
  height: 3px;
  margin-top: 14px;
}

.g-text .row .tick {
  margin-left: -2px;
}

.big {
  flex: 1;
  min-width: 0;
  display: flex;
  flex-direction: column;
  align-items: center;
  line-height: 14px;
}

.big > svg {
  width: 48px;
  height: 48px;
  margin: 1px 0 5px;
}

.big .inl {
  width: 8px;
  height: 8px;
  margin: 0;
}

.big span .inl {
  display: inline-block;
}

.grid3 {
  display: grid;
  grid-template-columns: 28px 28px 28px;
  grid-auto-rows: 28px;
  padding-left: 2px;
}

.stamp {
  margin-bottom: 1px;
}

.stamp .inl {
  margin-top: 3px;
}

.side {
  width: 33px;
  align-items: center;
}

.grid2 {
  display: grid;
  grid-template-columns: 40px 28px;
  grid-auto-rows: 28px;
  margin-right: 3px;
}

/* document tabs */
.doctabs {
  height: 34px;
  flex: none;
  display: flex;
  align-items: center;
  background-color: #8b8b8b;
  background-image: repeating-linear-gradient(45deg, rgba(0, 0, 0, 0.06) 0 1px, transparent 1px 3px), linear-gradient(#777, #969696);
  border-bottom: 2px solid #f5e2b0;
}

.doctab {
  height: 32px;
  width: 92px;
  padding: 0 0 0 5px;
  display: flex;
  align-items: center;
  justify-content: space-between;
  background: linear-gradient(#fdeecb, #f7e3b2);
  border-radius: 3px 3px 0 0;
}

.doctab span {
  height: 28px;
  line-height: 28px;
  border-bottom: 2px solid #a3977a;
}

.doctab svg {
  width: 7px;
  height: 7px;
  margin: 0 4px 14px 0;
}

.sq {
  width: 27px;
  height: 27px;
  margin-left: 2px;
  display: flex;
  align-items: center;
  justify-content: center;
  background: #d0d0d0;
  border-radius: 2px;
}

.sq svg {
  width: 16px;
  height: 16px;
}

.sq.wide {
  width: 30px;
  height: 29px;
  margin-right: 1px;
}

/* side panes */
.main {
  flex: 1;
  min-height: 0;
  display: flex;
  background: #f3f3f3;
}

.sidebar {
  width: 31px;
  flex: none;
  display: flex;
  flex-direction: column;
  align-items: center;
}

.sidehead {
  height: 11px;
  flex: none;
  align-self: stretch;
  background: #d8d8d8;
  display: flex;
  justify-content: flex-end;
  align-items: center;
}

.sidehead svg {
  width: 8px;
  height: 9px;
}

.grip {
  width: 9px;
  height: 16px;
  background-image: radial-gradient(#999 30%, transparent 40%);
  background-size: 3px 3px;
}

.wideg {
  width: 24px;
  height: 10px;
  margin: 2px 0 0;
  flex: none;
}

.pane {
  position: relative;
  width: 28px;
  height: 28px;
  flex: none;
  display: flex;
  align-items: center;
  justify-content: center;
}

.pane svg {
  width: 23px;
  height: 23px;
}

.dot::after {
  content: "";
  position: absolute;
  right: 0;
  bottom: 1px;
  width: 4px;
  height: 4px;
  border-radius: 2px;
  background: #4f9a20;
}

.sidebar hr {
  width: 28px;
  margin: 1px 0;
  border: none;
  border-top: 1px solid #bbb;
  flex: none;
}

.more {
  height: 22px;
  flex: none;
}

.more svg {
  width: 10px;
  height: 10px;
}

/* document view */
.viewer {
  flex: 1;
  min-width: 0;
  display: flex;
  flex-direction: column;
}

.workrow {
  flex: 1;
  min-height: 0;
  display: flex;
}

.work {
  flex: 1;
  min-width: 0;
  display: flex;
  justify-content: center;
  overflow: hidden;
  padding-right: 2px;
  background-color: #a2a2a2;
  background-image: repeating-linear-gradient(45deg, rgba(0, 0, 0, 0.05) 0 1px, transparent 1px 3px), linear-gradient(#858585, #aaa 50%);
  box-shadow: inset 0 0 10px #333;
}

.page {
  width: 452px;
  height: 100%;
  background: #fff;
  box-shadow: 0 0 6px 1px #333;
}

.page text {
  font-family: "Liberation Sans", Arial, sans-serif;
}

.rooms {
  font-size: 7px;
}

.notes {
  font-size: 4px;
  fill: #111;
}

.scroll {
  width: 15px;
  display: flex;
  flex-direction: column;
  align-items: center;
  background: #f0f0f0;
}

.scroll svg {
  width: 8px;
  height: 8px;
  margin: 3px 0;
}

.thumb {
  width: 5px;
  height: 21px;
  border-radius: 3px;
  background: #888;
}

/* status bar */
.status {
  height: 32px;
  flex: none;
  display: flex;
  align-items: center;
  border-top: 1px solid #888;
}

.gripcol {
  width: 11px;
  flex: none;
}

.gripcol svg {
  width: 7px;
  height: 8px;
  margin-top: 1px;
}

.options {
  display: flex;
  align-items: center;
  gap: 3px;
  padding-left: 2px;
  margin-right: 18px;
}

.options svg {
  width: 24px;
  height: 24px;
}

.options .inl {
  width: 8px;
  height: 8px;
  margin-left: 3px;
}

.nav {
  width: 28px;
  height: 28px;
  flex: none;
  display: flex;
  align-items: center;
  justify-content: center;
  color: #777;
}

.nav svg {
  width: 24px;
  height: 24px;
}

.soft {
  color: #b8b8b8;
}

.sel {
  background: #e4d1a3;
  border: 1px solid #d4bf88;
}

.views {
  display: flex;
  margin: 0 2px 0 1px;
}

.pagebox,
.zoombox {
  height: 23px;
  display: flex;
  align-items: center;
  background: #fff;
  border: 1px solid #b5b5b5;
  border-radius: 3px;
}

.pagebox {
  width: 97px;
  margin: 0 1px;
  padding-right: 3px;
}

.pagebox input {
  flex: 1;
  min-width: 0;
  border: none;
  outline: none;
  background: none;
  font: inherit;
  text-align: right;
  padding: 0;
}

.slash {
  font-size: 16px;
}

.total {
  margin-bottom: 4px;
}

.zoombox {
  width: 82px;
  margin: 0 1px;
  padding-right: 3px;
}

.zoombox select {
  flex: 1;
  min-width: 0;
  appearance: none;
  border: none;
  background: none;
  font: inherit;
  color: #000;
  padding: 0 0 0 3px;
}

.zoombox svg {
  width: 9px;
  height: 9px;
}

.slider {
  appearance: none;
  width: 100px;
  height: 20px;
  margin: 0 2px;
  background: linear-gradient(90deg, #999 14px, #bbb 14px) center / 100% 3px no-repeat;
}

.slider::-webkit-slider-thumb {
  appearance: none;
  width: 18px;
  height: 18px;
  border: 1px solid #666;
  border-radius: 50%;
  background: radial-gradient(#888 35%, #fff 38%);
}

.end {
  width: 12px;
  align-self: stretch;
  display: flex;
  justify-content: center;
  padding-top: 2px;
}

.end svg {
  width: 9px;
  height: 9px;
}
```
